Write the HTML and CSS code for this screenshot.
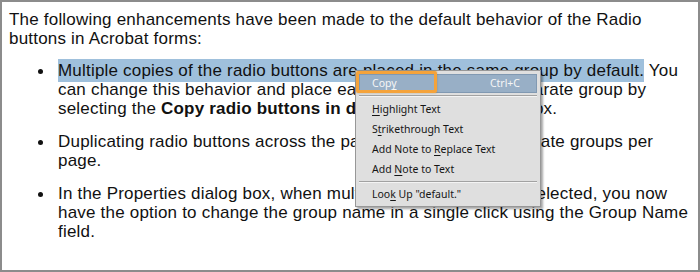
FILE: index.html
```html
<!DOCTYPE html>
<html lang="en">
<head>
    <meta charset="UTF-8">
    <title>Radio buttons in Acrobat forms</title>
    <link rel="stylesheet" href="styles.css">
</head>
<body>

    <div class="page">
        <p class="intro">The following enhancements have been made to the default behavior of the Radio buttons in Acrobat forms:</p>

        <ul class="notes">
            <li><span class="selected">Multiple copies of the radio buttons are placed in the same group by default.</span> You can change this behavior and place ea<span class="under-menu">ch copy in a sep</span>arate group by selecting the <b>Copy radio buttons in d<span class="under-menu tight">ifferent groups</span></b><span class="under-menu tight"> check b</span>ox.</li>
            <li>Duplicating radio buttons across the pa<span class="under-menu short">ges creates separ</span>ate groups per page.</li>
            <li>In the Properties dialog box, when multiple radio buttons are selected, you now have the option to change the group name in a single click using the Group Name field.</li>
        </ul>

        <!-- context menu over the selected text -->
        <div class="menu">
            <div class="item active">
                <span>Cop<u>y</u></span>
                <span class="key">Ctrl+C</span>
                <div class="callout"></div>
            </div>
            <div class="sep"></div>
            <div class="item"><span><u>H</u>ighlight Text</span></div>
            <div class="item"><span>S<u>t</u>rikethrough Text</span></div>
            <div class="item"><span>Add Note to <u>R</u>eplace Text</span></div>
            <div class="item"><span>Add <u>N</u>ote to Text</span></div>
            <div class="sep low"></div>
            <div class="item"><span>Loo<u>k</u> Up "default."</span></div>
        </div>
    </div>

</body>
</html>
```

FILE: styles.css
```css
body {
    margin: 0;
    background: white;
}

.page {
    position: relative;
    width: 700px;
    height: 272px;
    box-sizing: border-box;
    border: 2px solid #8c8c8c;
    padding: 8px 9px 0 7px;
    font-family: "Liberation Sans", Arial, sans-serif;
    font-size: 17px;
    line-height: 19px;
    letter-spacing: 0.2px;
    color: #111;
}

.intro {
    margin: 0 0 13px 0;
}

.notes {
    margin: 0;
    padding: 0 0 0 49px;
    list-style: none;
}

.notes li {
    position: relative;
    margin-bottom: 14px;
}

.notes li::before {
    content: "";
    position: absolute;
    left: -20px;
    top: 8px;
    width: 5px;
    height: 5px;
    border-radius: 50%;
    background: #111;
}

.selected {
    background: #9fc0dc;
    padding: 2px 0;
}

/* text hidden by the context menu, spaced like the source rendering */
.under-menu {
    letter-spacing: 3.4px;
}

.under-menu.short {
    letter-spacing: 2.7px;
}

.under-menu.tight {
    letter-spacing: -0.25px;
}

.menu {
    position: absolute;
    left: 353px;
    top: 68px;
    width: 182px;
    padding: 3px 1px 2px 1px;
    background: #dfdfdf;
    border: 1px solid #979797;
    box-shadow: 2px 2px 2px rgba(0, 0, 0, 0.35);
    font-family: "Noto Sans", "Open Sans", sans-serif;
    font-size: 10.5px;
    letter-spacing: 0;
    color: #151515;
}

.item {
    position: relative;
    display: flex;
    justify-content: space-between;
    align-items: center;
    height: 20px;
    padding: 0 18px 0 15px;
}

.item.active {
    height: 17px;
    margin: 0 2px 0 2px;
    padding: 0 16px 0 12px;
    background: #98afc6;
    border: 1px solid #8199b2;
    color: #f6f6f6;
}

.item u {
    text-decoration-thickness: 1px;
    text-underline-offset: 2px;
}

.callout {
    position: absolute;
    left: -4px;
    top: -4px;
    width: 75px;
    height: 16px;
    border: 3px solid #f5a33b;
    border-radius: 2px;
    box-shadow: 0 0 2px rgba(120, 80, 0, 0.4);
}

.sep {
    height: 1px;
    margin: 2px 2px 2px 2px;
    background: #a2a2a2;
    border-bottom: 1px solid #f4f4f4;
}

.sep.low {
    margin-bottom: 1px;
}
```
